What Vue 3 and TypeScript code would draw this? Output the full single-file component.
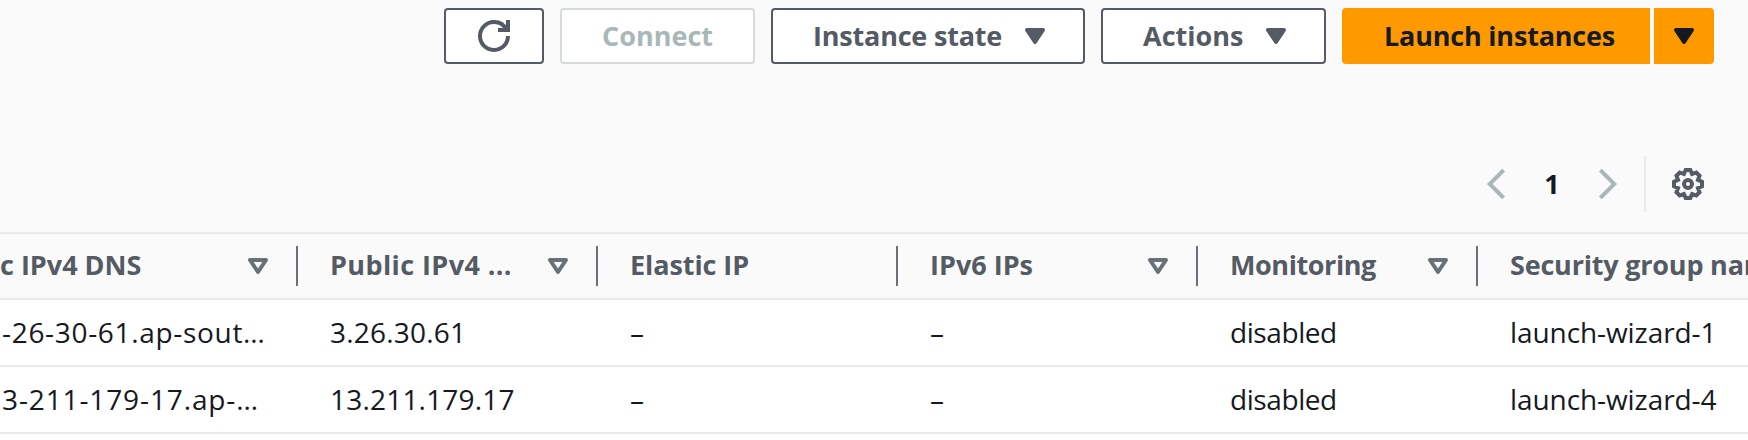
<script setup lang="ts">
interface Column {
  label: string
  fit: string
  sortable: boolean
  cells: { text: string; fit: string }[]
}

const CARET = 'M4 5h8l-4 6z'

const columns: Column[] = [
  {
    label: 'c IPv4 DNS', fit: 'f-0', sortable: true,
    cells: [
      { text: '-26-30-61.ap-sout…', fit: 'f-dns-a' },
      { text: '3-211-179-17.ap-…', fit: 'f-dns-b' },
    ],
  },
  {
    label: 'Public IPv4 ...', fit: 'f-wide', sortable: true,
    cells: [
      { text: '3.26.30.61', fit: 'f-plus' },
      { text: '13.211.179.17', fit: 'f-plus' },
    ],
  },
  {
    label: 'Elastic IP', fit: 'f-slight', sortable: false,
    cells: [{ text: '–', fit: 'f-0' }, { text: '–', fit: 'f-0' }],
  },
  {
    label: 'IPv6 IPs', fit: 'f-0', sortable: true,
    cells: [{ text: '–', fit: 'f-0' }, { text: '–', fit: 'f-0' }],
  },
  {
    label: 'Monitoring', fit: 'f-tight', sortable: true,
    cells: [
      { text: 'disabled', fit: 'f-tight' },
      { text: 'disabled', fit: 'f-tight' },
    ],
  },
  {
    label: 'Security group name', fit: 'f-minus', sortable: false,
    cells: [
      { text: 'launch-wizard-1', fit: 'f-slight' },
      { text: 'launch-wizard-4', fit: 'f-slight' },
    ],
  },
]

// Eight-tooth gear outline on a 16-unit grid.
function gearPath(): string {
  const points: string[] = []
  const add = (x: number, y: number, deg: number) => {
    const a = (deg * Math.PI) / 180
    const px = 8 + x * Math.cos(a) - y * Math.sin(a)
    const py = 8 + x * Math.sin(a) + y * Math.cos(a)
    points.push(`${px.toFixed(2)} ${py.toFixed(2)}`)
  }
  for (let k = 0; k < 8; k++) {
    add(-1.15, -7, k * 45)
    add(1.15, -7, k * 45)
    add(0, -5.4, k * 45 + 22.5)
  }
  return `M${points.join('L')}Z`
}
const gear = gearPath()
</script>

<template>
  <main class="page">
    <div class="toolbar">
      <button class="btn refresh" aria-label="Refresh">
        <svg class="icon" viewBox="0 0 16 16">
          <path d="M10 5h5V0" />
          <path d="M15 8a6.957 6.957 0 0 1-7 7 6.957 6.957 0 0 1-7-7 6.957 6.957 0 0 1 7-7 6.87 6.87 0 0 1 6.3 4" />
        </svg>
      </button>
      <button class="btn connect" disabled>Connect</button>
      <button class="btn state">
        <span class="f-minus">Instance state</span>
        <svg class="icon solid" viewBox="0 0 16 16"><path :d="CARET" /></svg>
      </button>
      <button class="btn actions">
        <span>Actions</span>
        <svg class="icon solid" viewBox="0 0 16 16"><path :d="CARET" /></svg>
      </button>
      <div class="split">
        <button class="btn primary launch"><span class="f-minus">Launch instances</span></button>
        <button class="btn primary more" aria-label="More launch options">
          <svg class="icon solid" viewBox="0 0 16 16"><path :d="CARET" /></svg>
        </button>
      </div>
    </div>

    <nav class="pager">
      <svg class="icon chevron" viewBox="0 0 32 32"><path d="M23.6 2.2 9.8 16l13.8 13.8" /></svg>
      <span class="current">1</span>
      <svg class="icon chevron" viewBox="0 0 32 32"><path d="M8.4 2.2 22.2 16 8.4 29.8" /></svg>
      <i class="divider"></i>
      <svg class="icon" viewBox="0 0 16 16">
        <path :d="gear" />
        <circle cx="8" cy="8" r="2" />
      </svg>
    </nav>

    <section class="table">
      <div class="row head">
        <div v-for="col in columns" :key="col.label" class="cell">
          <span class="text" :class="col.fit">{{ col.label }}</span>
          <svg v-if="col.sortable" class="icon sort" viewBox="0 0 16 16"><path :d="CARET" /></svg>
        </div>
      </div>
      <div v-for="r in 2" :key="r" class="row">
        <div v-for="col in columns" :key="col.label" class="cell">
          <span class="text" :class="col.cells[r - 1].fit">{{ col.cells[r - 1].text }}</span>
        </div>
      </div>
    </section>
  </main>
</template>

<style>
body {
  margin: 0;
  overflow: hidden;
}
</style>

<style scoped>
.page {
  width: 1748px;
  height: 440px;
  overflow: hidden;
  background: #fff;
  color: #16191f;
  font-family: "Open Sans", "Noto Sans", sans-serif;
  font-size: 28px;
  white-space: nowrap;
  display: flex;
  flex-direction: column;
}
.toolbar {
  display: flex;
  flex: none;
  justify-content: flex-end;
  gap: 16px;
  height: 56px;
  padding: 8px 34px 92px;
  background: #fafafa;
}
.btn {
  box-sizing: border-box;
  display: flex;
  align-items: center;
  height: 56px;
  margin: 0;
  padding: 0;
  border: 2px solid #545b64;
  border-radius: 4px;
  background: #fff;
  color: #545b64;
  font: 700 27px/40px "Open Sans", "Noto Sans", sans-serif;
}
.icon {
  flex: none;
  width: 32px;
  height: 32px;
  fill: none;
  stroke: #545b64;
  stroke-width: 2;
}
.solid {
  fill: currentColor;
  stroke: currentColor;
  stroke-linejoin: round;
}
.refresh {
  width: 100px;
  justify-content: center;
}
.connect {
  width: 195px;
  justify-content: center;
  border-color: #d5dbdb;
  color: #aab7b8;
}
.state {
  width: 314px;
  justify-content: space-between;
  padding: 0 32px 0 40px;
}
.actions {
  width: 225px;
  justify-content: space-between;
  padding: 0 32px 0 40px;
}
.split {
  display: flex;
  gap: 4px;
}
.primary {
  justify-content: center;
  border-color: #f90;
  background: #f90;
  color: #16191f;
}
.launch {
  width: 308px;
  padding-left: 7px;
  border-radius: 4px 0 0 4px;
}
.more {
  width: 60px;
  border-radius: 0 4px 4px 0;
}
.pager {
  flex: none;
  display: grid;
  grid-template-columns: 32px 80px 32px 20px 2px 26px 32px;
  justify-content: end;
  align-items: center;
  height: 56px;
  padding: 0 44px 20px 0;
  background: #fafafa;
}
.current {
  text-align: center;
  font-size: 27px;
  line-height: 40px;
  font-weight: 700;
}
.chevron {
  stroke: #aab7b8;
  stroke-width: 4;
}
.divider {
  grid-column: 5;
  height: 56px;
  background: #eaeaea;
}
.divider + .icon {
  grid-column: 7;
}
.table {
  flex: 1;
}
.row {
  display: grid;
  grid-template-columns: 298px 300px 300px 300px 280px 270px;
  height: 65px;
  border-bottom: 2px solid #eaeaea;
}
.head {
  height: 64px;
  border-top: 2px solid #eaeaea;
  background: #fafafa;
  color: #545b64;
  font-size: 27px;
  font-weight: 700;
}
.cell {
  box-sizing: border-box;
  display: flex;
  align-items: center;
  min-width: 0;
  padding-left: 32px;
}
.cell:first-child {
  padding-left: 2px;
}
.head .cell:first-child {
  padding-left: 0;
}
.head .cell {
  justify-content: space-between;
  align-self: center;
  height: 40px;
  padding-right: 22px;
  border-right: 2px solid #687078;
}
.head .cell:last-child {
  padding-right: 0;
  border-right: 0;
}
.text {
  line-height: 38px;
  padding-bottom: 2px;
}
.sort {
  stroke: #687078;
  stroke-linejoin: round;
}
.f-0 {
  letter-spacing: 0;
}
.f-slight {
  letter-spacing: -0.08px;
}
.f-plus {
  letter-spacing: 0.2px;
}
.f-wide {
  letter-spacing: 0.4px;
}
.f-minus {
  letter-spacing: -0.2px;
}
.f-tight {
  letter-spacing: -0.42px;
}
.f-dns-a {
  letter-spacing: 0.68px;
}
.f-dns-b {
  letter-spacing: 0.88px;
}
</style>
